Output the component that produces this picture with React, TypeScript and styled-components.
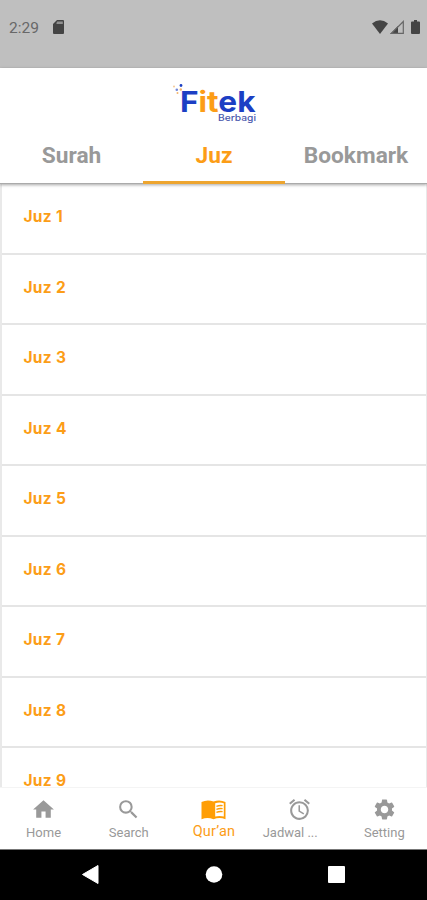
import React from "react";
import styled, { createGlobalStyle } from "styled-components";
import { MdHome, MdSearch, MdAlarm, MdSettings } from "react-icons/md";

const colors = {
  accent: "#fc9d17",
  muted: "#999999",
  blue: "#1c3fc4",
  status: "#bfbfbf",
  statusIcon: "#444444",
};

const BookIcon = () => {
  return (
    <svg width="25" height="20" viewBox="0 0 25 20">
      <path
        d="M0.5 2Q6.5 -1 12.5 1.6Q18.5 -1 24.5 2V19.2Q18.5 16.6 12.5 19.2Q6.5 16.6 0.5 19.2Z"
        fill="#ff9e05"
      />
      <path d="M14.2 3.2Q18.5 1.6 22.8 3.2V16.6Q18.5 15.2 14.2 16.6Z" fill="#fff" />
      <path
        d="M15.4 6.4Q18.5 5.1 21.6 5.7M15.4 9.4Q18.5 8.1 21.6 8.7M15.4 12.4Q18.5 11.1 21.6 11.7"
        fill="none"
        stroke="#ff9e05"
        strokeWidth="1.3"
      />
    </svg>
  );
};

const tabs = ["Surah", "Juz", "Bookmark"];

const juzList = [1, 2, 3, 4, 5, 6, 7, 8, 9];

const menu = [
  { title: "Home", icon: <MdHome size={25} /> },
  { title: "Search", icon: <MdSearch size={25} /> },
  { title: "Qur’an", icon: <BookIcon />, active: true },
  { title: "Jadwal ...", icon: <MdAlarm size={25} />, clipped: true },
  { title: "Setting", icon: <MdSettings size={25} /> },
];

const StatusBar = () => {
  return (
    <StyledStatusBar>
      <Time>2:29</Time>
      <svg width="11" height="14" viewBox="0 0 11 14">
        <path d="M4 0H10Q11 0 11 1V13Q11 14 10 14H1Q0 14 0 13V4Z" fill={colors.statusIcon} />
        <path d="M4.2 1.5H9.8V4H3.5V3Z" fill="#919191" />
      </svg>
      <StatusIcons>
        <svg width="16" height="14" viewBox="0 0 16 14">
          <path d="M0 3.5Q8 -3 16 3.5L8 14Z" fill={colors.statusIcon} />
        </svg>
        <svg width="14" height="14" viewBox="0 0 14 14">
          <path d="M0 14L8 6V14Z" fill={colors.statusIcon} />
          <path d="M1.5 13.3L13.3 1.5V13.3Z" fill="none" stroke="#666666" strokeWidth="1.2" />
        </svg>
        <svg width="9" height="15" viewBox="0 0 9 15">
          <path d="M3 0H6V1.5H8Q9 1.5 9 2.5V13Q9 14 8 14H1Q0 14 0 13V2.5Q0 1.5 1 1.5H3Z" fill={colors.statusIcon} />
        </svg>
      </StatusIcons>
    </StyledStatusBar>
  );
};

const Logo = () => {
  return (
    <StyledLogo width="90" height="44" viewBox="0 0 90 44">
      <circle cx="12" cy="5.5" r="1.4" fill={colors.blue} />
      <circle cx="5" cy="6.5" r="1" fill="#f5c896" />
      <circle cx="7.8" cy="9.8" r="1.3" fill="#7186d8" />
      <circle cx="11.8" cy="9.5" r="1.2" fill="#f5b56c" />
      <circle cx="8.5" cy="13" r="1" fill="#f5b56c" />
      <LogoText x="11" y="31.5" textLength="75.5" lengthAdjust="spacingAndGlyphs">
        F<tspan fill={colors.accent}>it</tspan>ek
      </LogoText>
      <LogoCaption x="49" y="40.5" textLength="38" lengthAdjust="spacingAndGlyphs">
        Berbagi
      </LogoCaption>
    </StyledLogo>
  );
};

const App = () => {
  return (
    <Screen>
      <GlobalStyle />
      <StatusBar />
      <Header>
        <Logo />
        <Tabs>
          {tabs.map((tab) => (
            <Tab key={tab} $active={tab === "Juz"}>
              {tab}
            </Tab>
          ))}
        </Tabs>
      </Header>
      <List>
        {juzList.map((juz) => (
          <Item key={juz}>Juz {juz}</Item>
        ))}
      </List>
      <BottomMenu>
        {menu.map(({ title, icon, active, clipped }) => (
          <MenuItem key={title} $active={active} $clipped={clipped}>
            {icon}
            <span>{title}</span>
          </MenuItem>
        ))}
      </BottomMenu>
      <SystemBar>
        <svg width="18" height="20" viewBox="0 0 18 20">
          <path d="M0.5 9.5L16 0.5V18.5Z" fill="#fff" stroke="#fff" strokeLinejoin="round" />
        </svg>
        <svg width="18" height="18" viewBox="0 0 18 18">
          <circle cx="9" cy="8.5" r="8.3" fill="#fff" />
        </svg>
        <svg width="18" height="18" viewBox="0 0 18 18">
          <rect x="0" y="0" width="17" height="17" rx="1" fill="#fff" />
        </svg>
      </SystemBar>
    </Screen>
  );
};

export default App;

const GlobalStyle = createGlobalStyle`
  * {
    box-sizing: border-box;
  }
  body {
    margin: 0;
    font-family: Roboto, sans-serif;
    background-color: #fff;
  }
`;
const Screen = styled.div`
  display: flex;
  flex-direction: column;
  width: 427px;
  height: 900px;
  overflow: hidden;
`;
const StyledStatusBar = styled.div`
  display: flex;
  align-items: flex-start;
  flex-shrink: 0;
  height: 68px;
  padding: 20px 7px 0 9px;
  background-color: ${colors.status};
`;
const Time = styled.span`
  width: 44px;
  color: #686868;
  font-size: 15.5px;
  line-height: 17px;
`;
const StatusIcons = styled.div`
  display: flex;
  align-items: flex-start;
  margin-left: auto;

  svg:nth-child(2) {
    margin: 0 7px 0 2px;
  }
`;
const Header = styled.header`
  display: flex;
  flex-direction: column;
  align-items: center;
  flex-shrink: 0;
  height: 116px;
  padding-top: 12px;
  background-color: #fff;
  box-shadow: 0 1px 3px rgba(0, 0, 0, 0.35);
  border-bottom: 1px solid #aaa;
  z-index: 1;
`;
const StyledLogo = styled.svg`
  flex-shrink: 0;
`;
const LogoText = styled.text`
  font: 700 29px Inter, sans-serif;
  fill: ${colors.blue};
`;
const LogoCaption = styled.text`
  font: 500 9px Inter, sans-serif;
  fill: #4958ad;
`;
const Tabs = styled.nav`
  display: grid;
  grid-template-columns: 143px 142px 142px;
  flex: 1;
  width: 100%;
  margin-bottom: -1px;
`;
const Tab = styled.div<{ $active: boolean }>`
  padding-top: 18px;
  border-bottom: 3px solid ${({ $active }) => ($active ? "#eda52f" : "transparent")};
  color: ${({ $active }) => ($active ? colors.accent : colors.muted)};
  font-size: 22.7px;
  font-weight: 700;
  line-height: 28px;
  text-align: center;
`;
const List = styled.main`
  flex: 1;
  min-height: 0;
  overflow: hidden;
  border-left: 2px solid #e9e9e9;
  border-right: 1px solid #e9e9e9;
`;
const Item = styled.div`
  height: 70.55px;
  padding: 22px 0 0 21.5px;
  border-bottom: 2px solid #e5e5e5;
  color: ${colors.accent};
  font: 700 15.5px/21px Inter, sans-serif;
  letter-spacing: 0.3px;
`;
const BottomMenu = styled.footer`
  display: grid;
  grid-template-columns: repeat(5, 1fr);
  flex-shrink: 0;
  height: 62px;
  padding-left: 1px;
  border-top: 1px solid #f4f4f4;
  background-color: #fff;
`;
const MenuItem = styled.div<{ $active?: boolean; $clipped?: boolean }>`
  display: flex;
  flex-direction: column;
  align-items: center;
  padding-top: ${({ $active }) => ($active ? 12 : 9)}px;
  color: ${({ $active }) => ($active ? colors.accent : colors.muted)};
  font-size: ${({ $active }) => ($active ? 14.5 : 13)}px;
  line-height: 18px;
  white-space: nowrap;

  span {
    margin-top: ${({ $active }) => ($active ? 3 : 2)}px;
    margin-right: ${({ $clipped }) => ($clipped ? 18 : 0)}px;
    letter-spacing: ${({ $active }) => ($active ? "0.2px" : "0")};
  }
`;
const SystemBar = styled.div`
  display: flex;
  justify-content: center;
  align-items: center;
  gap: 105px;
  flex-shrink: 0;
  height: 51px;
  border-top: 1px solid #777;
  background-color: #000;
`;
